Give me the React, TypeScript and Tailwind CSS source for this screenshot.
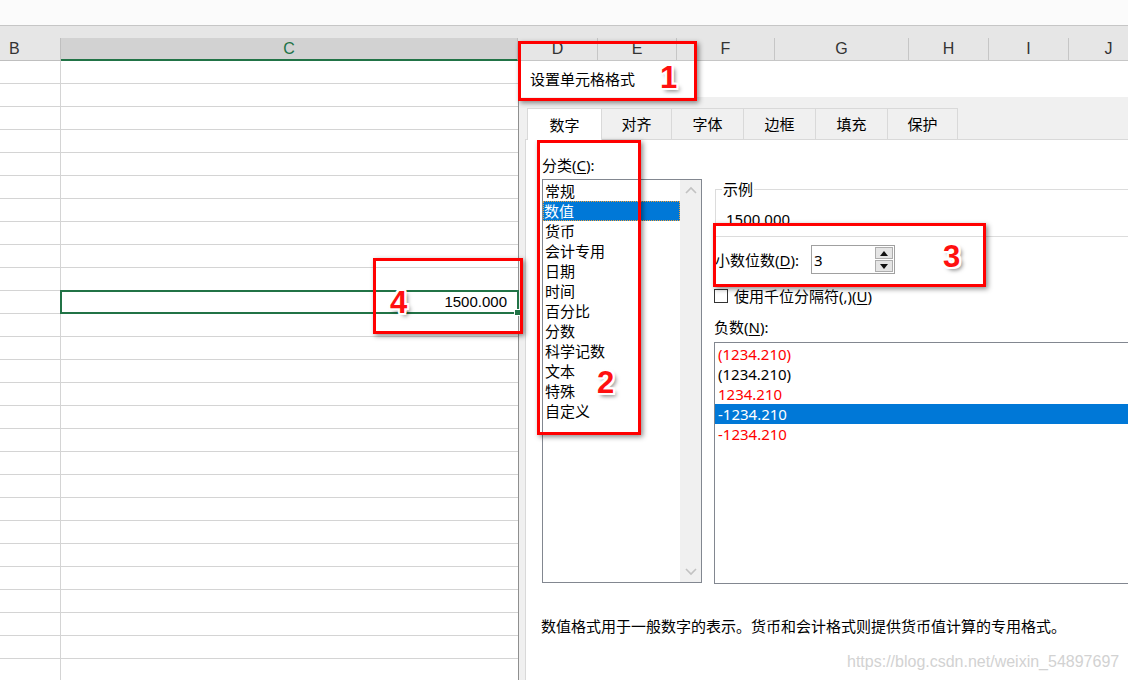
import React from "react";

const categories = ["常规", "数值", "货币", "会计专用", "日期", "时间", "百分比", "分数", "科学记数", "文本", "特殊", "自定义"];

const negatives: { t: string; c: string; sel?: boolean }[] = [
  { t: "(1234.210)", c: "text-[#ff0000]" },
  { t: "(1234.210)", c: "text-black" },
  { t: "1234.210", c: "text-[#ff0000]" },
  { t: "-1234.210", c: "text-white", sel: true },
  { t: "-1234.210", c: "text-[#ff0000]" },
];

const headerCols: { l: string; w: string }[] = [
  { l: "D", w: "w-[80px]" },
  { l: "E", w: "w-[79px]" },
  { l: "F", w: "w-[98px]" },
  { l: "G", w: "w-[134px]" },
  { l: "H", w: "w-[80px]" },
  { l: "I", w: "w-[80px]" },
  { l: "J", w: "w-[80px]" },
];

const tabs: { l: string; w: string }[] = [
  { l: "对齐", w: "w-[70px]" },
  { l: "字体", w: "w-[72px]" },
  { l: "边框", w: "w-[72px]" },
  { l: "填充", w: "w-[72px]" },
  { l: "保护", w: "w-[70px]" },
];

function Badge({ n, cls }: { n: string; cls: string }) {
  return (
    <div
      className={`absolute ${cls} font-['Liberation_Sans',sans-serif] font-bold text-[31px] leading-[30px] text-[#ff1010] [text-shadow:-2px_-2px_0_#fff,2px_-2px_0_#fff,-2px_2px_0_#fff,2px_2px_0_#fff,0_-2px_0_#fff,0_2px_0_#fff,-2px_0_0_#fff,2px_0_0_#fff,3px_3px_4px_rgba(0,0,0,0.55)]`}
    >
      {n}
    </div>
  );
}

export default function App() {
  const rows = Array.from({ length: 27 }, (_, i) => i);
  return (
    <div className="relative w-[1128px] h-[680px] overflow-hidden bg-white font-['Noto_Sans','Noto_Sans_CJK_SC',sans-serif] text-[15px] text-black">
      <div className="h-[26px] bg-[#fbfbfb] border-b border-[#c6c6c6]" />
      <div className="h-[12px] bg-[#e6e6e6]" />
      {/* column headers */}
      <div className="flex h-[23px] bg-[#e6e6e6] font-['Liberation_Sans',sans-serif] text-[16px] text-[#333] whitespace-nowrap">
        <div className="w-[61px] shrink-0 border-r border-b border-[#bfbfbf] flex items-center pl-[9px]">B</div>
        <div className="w-[457px] shrink-0 bg-[#d2d2d2] border-b-2 border-b-[#217346] border-r border-r-[#bfbfbf] flex items-center justify-center text-[#217346]">
          C
        </div>
        {headerCols.map((c) => (
          <div key={c.l} className={`${c.w} shrink-0 border-r border-b border-[#c6c6c6] flex items-center justify-center`}>
            {c.l}
          </div>
        ))}
      </div>

      <div className="flex h-[619px]">
        {/* sheet */}
        <div className="w-[518px] shrink-0 flex flex-col">
          {rows.map((r) => (
            <div key={r} className="relative flex h-[23px] shrink-0 border-b border-[#d4d4d4]">
              <div className="w-[61px] shrink-0 border-r border-[#d4d4d4]" />
              <div className="flex-1 flex items-center justify-end pr-[11px] font-['Liberation_Sans',sans-serif] text-[15px]">
                {r === 10 ? "1500.000" : ""}
              </div>
              {r === 10 && (
                <div className="absolute left-[60px] -top-[1px] -right-[1px] -bottom-[1px] border-2 border-[#217346]">
                  <div className="absolute -right-[4px] -bottom-[4px] w-[7px] h-[7px] bg-[#217346] border border-white" />
                </div>
              )}
            </div>
          ))}
        </div>

        {/* dialog */}
        <div className="w-[610px] shrink-0 flex flex-col border-l border-[#8f8f8f] bg-[#f0f0f0]">
          <div className="h-[36px] shrink-0 bg-white flex items-center pl-[11px] leading-[20px]">设置单元格格式</div>
          <div className="flex-1 flex flex-col pl-[6px] pt-[11px]">
            <div className="flex h-[31px] pl-[2px] items-start">
              <div className="relative z-10 w-[75px] h-[32px] bg-white border-t border-l border-r border-[#d9d9d9] flex items-center justify-center leading-[20px]">
                数字
              </div>
              {tabs.map((t) => (
                <div
                  key={t.l}
                  className={`${t.w} h-[31px] bg-[#f0f0f0] border-t border-r border-[#d9d9d9] flex items-center justify-center leading-[20px]`}
                >
                  {t.l}
                </div>
              ))}
            </div>
            <div className="flex-1 bg-white border-l border-t border-[#d9d9d9] pl-[16px] pt-[15px] flex flex-col">
              <div className="flex">
                {/* category column */}
                <div className="w-[160px] shrink-0 flex flex-col">
                  <div className="h-[20px] leading-[20px]">
                    分类(<span className="underline underline-offset-2">C</span>):
                  </div>
                  <div className="mt-[4px] h-[404px] border border-[#828790] flex">
                    <div className="flex-1 pt-[1px] flex flex-col">
                      {categories.map((c) => (
                        <div
                          key={c}
                          className={
                            c === "数值"
                              ? "h-[20px] leading-[20px] pl-[1px] bg-[#0078d7] text-white outline-1 outline-dotted outline-[#f2a13a] -outline-offset-1"
                              : "h-[20px] leading-[20px] pl-[2px]"
                          }
                        >
                          {c}
                        </div>
                      ))}
                    </div>
                    <div className="w-[21px] bg-[#f0f0f0] flex flex-col justify-between items-center py-[6px]">
                      <svg width="12" height="8" viewBox="0 0 12 8">
                        <path d="M1 7 L6 2 L11 7" fill="none" stroke="#c2c2c2" strokeWidth="1.6" />
                      </svg>
                      <svg width="12" height="8" viewBox="0 0 12 8">
                        <path d="M1 1 L6 6 L11 1" fill="none" stroke="#c2c2c2" strokeWidth="1.6" />
                      </svg>
                    </div>
                  </div>
                </div>

                {/* right column */}
                <div className="ml-[13px] w-[440px] shrink-0 flex flex-col pt-[24px]">
                  <fieldset className="border border-[#dcdcdc] h-[58px]">
                    <legend className="ml-[6px] px-[1px] leading-[20px]">示例</legend>
                    <div className="mt-[10px] h-[20px] leading-[20px] pl-[10px]">1500.000</div>
                  </fieldset>
                  <div className="mt-[8px] flex h-[29px] items-center">
                    <div className="w-[96px] leading-[20px]">
                      小数位数(<span className="underline underline-offset-2">D</span>):
                    </div>
                    <div className="w-[84px] h-[29px] border border-[#a0a0a0] flex bg-white">
                      <div className="flex-1 pl-[2px] flex items-center leading-[20px]">3</div>
                      <div className="w-[20px] flex flex-col gap-[1px] p-[1px]">
                        <div className="flex-1 bg-[#e5e5e5] border border-[#adadad] flex items-center justify-center">
                          <svg width="8" height="5" viewBox="0 0 8 5">
                            <polygon points="0,5 4,0 8,5" fill="#111" />
                          </svg>
                        </div>
                        <div className="flex-1 bg-[#e5e5e5] border border-[#adadad] flex items-center justify-center">
                          <svg width="8" height="5" viewBox="0 0 8 5">
                            <polygon points="0,0 8,0 4,5" fill="#111" />
                          </svg>
                        </div>
                      </div>
                    </div>
                  </div>
                  <div className="mt-[14px] h-[16px] flex items-center -ml-px">
                    <div className="w-[14px] h-[14px] border border-[#333] bg-white" />
                    <div className="ml-[6px] leading-[20px]">
                      使用千位分隔符(,)(<span className="underline underline-offset-2">U</span>)
                    </div>
                  </div>
                  <div className="mt-[13px] h-[20px] leading-[20px] -ml-px">
                    负数(<span className="underline underline-offset-2">N</span>):
                  </div>
                  <div className="mt-[5px] h-[242px] border border-[#828790] -ml-px pt-[1px] flex flex-col">
                    {negatives.map((n, i) => (
                      <div
                        key={i}
                        className={`h-[20px] leading-[20px] pl-[3px] ${n.c} ${n.sel ? "bg-[#0078d7]" : ""}`}
                      >
                        {n.t}
                      </div>
                    ))}
                  </div>
                </div>
              </div>
              <div className="mt-[32px] h-[20px] leading-[20px] -ml-px whitespace-nowrap">
                数值格式用于一般数字的表示。货币和会计格式则提供货币值计算的专用格式。
              </div>
            </div>
          </div>
        </div>
      </div>

      {/* watermark */}
      <div className="absolute left-[847px] top-[652px] font-['Liberation_Sans',sans-serif] text-[16px] leading-[20px] text-[#d2d2d2] whitespace-nowrap">
        https://blog.csdn.net/weixin_54897697
      </div>

      {/* annotation boxes */}
      <div className="absolute left-[518px] top-[41px] w-[179px] h-[60px] border-[3px] border-[#ff0000] shadow-[2px_2px_5px_rgba(0,0,0,0.45)]" />
      <div className="absolute left-[537px] top-[140px] w-[104px] h-[295px] border-[3px] border-[#ff0000] shadow-[2px_2px_5px_rgba(0,0,0,0.45)]" />
      <div className="absolute left-[713px] top-[223px] w-[273px] h-[64px] border-[3px] border-[#ff0000] shadow-[2px_2px_5px_rgba(0,0,0,0.45)]" />
      <div className="absolute left-[373px] top-[258px] w-[150px] h-[76px] border-[3px] border-[#ff0000] shadow-[2px_2px_5px_rgba(0,0,0,0.45)]" />

      <Badge n="1" cls="left-[660px] top-[63px]" />
      <Badge n="2" cls="left-[597px] top-[368px]" />
      <Badge n="3" cls="left-[943px] top-[242px]" />
      <Badge n="4" cls="left-[390px] top-[288px]" />
    </div>
  );
}
